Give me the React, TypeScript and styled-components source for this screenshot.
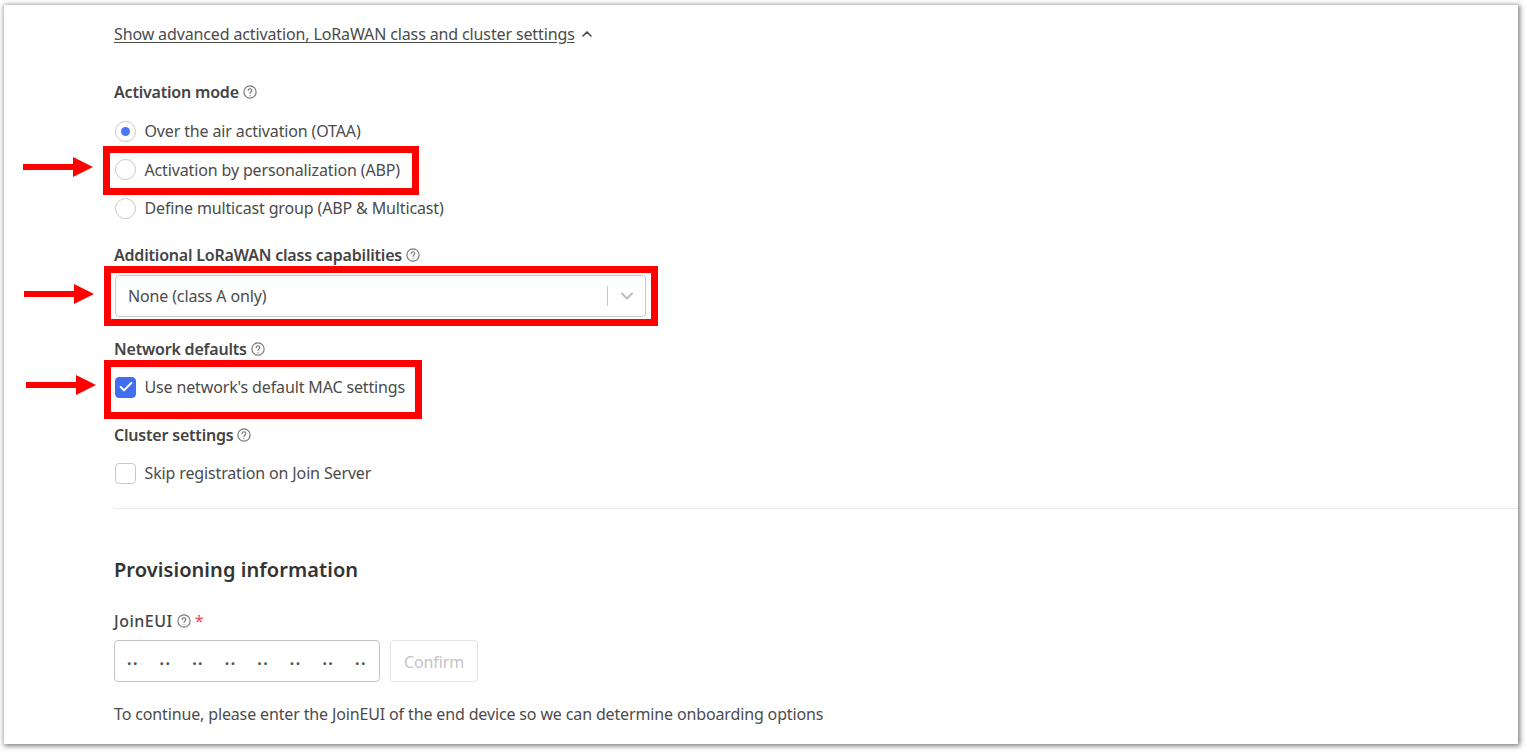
import React from 'react';
import styled, { createGlobalStyle } from 'styled-components';
import { Check, ChevronDown, ChevronUp } from 'lucide-react';

const Global = createGlobalStyle`
  html, body { margin: 0; padding: 0; background: #fff; }
  body { font-family: "Noto Sans", "Open Sans", sans-serif; color: #3a3a3a; }
`

const Page = styled.div`
  position: relative;
  width: 1527px;
  height: 753px;
  overflow: hidden;
`

const Card = styled.div`
  box-sizing: border-box;
  width: 1514px;
  height: 739px;
  margin: 5px 0 0 4px;
  padding: 18px 0 0 110px;
  background: #fff;
  box-shadow: 1px 1px 5px 1px rgba(0, 0, 0, 0.5);
`

const Toggle = styled.div`
  display: flex;
  align-items: center;
  gap: 4px;
  height: 22px;
  margin-bottom: 37px;
  font-size: 16px;
  letter-spacing: -0.13px;
  color: #4b4b4b;
  span { text-decoration: underline; text-underline-offset: 2px; }
`

const Label = styled.div<{ $after?: number }>`
  display: flex;
  align-items: center;
  gap: 4px;
  height: 20px;
  margin-bottom: ${p => p.$after ?? 0}px;
  font-size: 16px;
  font-weight: 600;
  letter-spacing: -0.2px;
  color: #444;
`

const FieldName = styled.span`
  font-weight: 500;
  letter-spacing: 0.5px;
`

const Hint = styled.svg`
  width: 14px;
  height: 14px;
  flex: none;
`

const Required = styled.span`
  color: #e5484d;
  font-weight: 400;
`

const Options = styled.div<{ $after: number; $gap?: number }>`
  display: flex;
  flex-direction: column;
  gap: ${p => p.$gap ?? 0}px;
  margin-bottom: ${p => p.$after}px;
`

const Option = styled.div`
  display: flex;
  align-items: center;
  gap: 8.5px;
  height: 22px;
  padding-left: 1px;
  font-size: 16px;
  letter-spacing: -0.14px;
  color: #4b4b4b;
`

const Radio = styled.span<{ $on?: boolean }>`
  box-sizing: border-box;
  width: 21px;
  height: 21px;
  flex: none;
  border-radius: 50%;
  border: 1px solid #c9c9c9;
  display: flex;
  align-items: center;
  justify-content: center;
  &::after {
    content: "";
    display: ${p => (p.$on ? 'block' : 'none')};
    width: 9px;
    height: 9px;
    border-radius: 50%;
    background: #4a76f5;
  }
`

const Box = styled.span<{ $on?: boolean }>`
  box-sizing: border-box;
  width: 21px;
  height: 21px;
  flex: none;
  border-radius: 4px;
  border: 1px solid ${p => (p.$on ? '#3f6ff0' : '#c9c9c9')};
  background: ${p => (p.$on ? '#3f6ff0' : '#fff')};
  color: #fff;
  display: flex;
  align-items: center;
  justify-content: center;
`

const Select = styled.div`
  box-sizing: border-box;
  width: 531px;
  height: 42px;
  margin: 10px 0 22px 1px;
  padding-left: 12px;
  display: flex;
  align-items: center;
  border: 1px solid #c9c9c9;
  border-radius: 4px;
  font-size: 16px;
  letter-spacing: -0.14px;
  color: #4b4b4b;
`

const SelectValue = styled.span`
  flex: 1;
`

const SelectArrow = styled.span`
  width: 37px;
  height: 20px;
  border-left: 1px solid #c9c9c9;
  color: #bdbdbd;
  display: flex;
  align-items: center;
  justify-content: center;
`

const Divider = styled.div`
  height: 1px;
  background: #ececec;
  margin-bottom: 47px;
`

const Heading = styled.h2`
  margin: 0 0 27px;
  height: 28px;
  line-height: 28px;
  font-size: 20px;
  font-weight: 600;
  letter-spacing: 0.07px;
  color: #333;
`

const InputRow = styled.div`
  display: flex;
  gap: 10px;
  margin: 9px 0 21px;
`

const Input = styled.div`
  box-sizing: border-box;
  width: 266px;
  height: 42px;
  padding: 3px 12px 0;
  display: flex;
  align-items: center;
  justify-content: space-between;
  border: 1px solid #c4c4c4;
  border-radius: 4px;
  font-size: 16px;
  font-weight: 700;
  letter-spacing: 1.5px;
  color: #555;
`

const Confirm = styled.div`
  box-sizing: border-box;
  width: 88px;
  height: 42px;
  padding-top: 1px;
  display: flex;
  align-items: center;
  justify-content: center;
  border: 1px solid #e4e4e4;
  border-radius: 4px;
  font-size: 16px;
  letter-spacing: -0.1px;
  color: #c4c4c4;
`

const Note = styled.div`
  font-size: 16px;
  line-height: 22px;
  letter-spacing: -0.14px;
  color: #4b4b4b;
`

const Highlight = styled.div<{ $x: number; $y: number; $w: number; $h: number }>`
  position: absolute;
  box-sizing: border-box;
  left: ${p => p.$x}px;
  top: ${p => p.$y}px;
  width: ${p => p.$w}px;
  height: ${p => p.$h}px;
  border: 7px solid #ff0000;
`

const Arrow = styled.svg<{ $x: number; $y: number }>`
  position: absolute;
  left: ${p => p.$x}px;
  top: ${p => p.$y}px;
  width: 70px;
  height: 22px;
`

const HintIcon = () => (
  <Hint viewBox="0 0 24 24" fill="none" stroke="#7a7a7a" strokeWidth="2" strokeLinecap="round">
    <circle cx="12" cy="12" r="10.5" />
    <path d="M9 9.5a3 3 0 1 1 4.6 2.5c-1 .7-1.6 1.3-1.6 2.5" />
    <path d="M12 18v.2" />
  </Hint>
)

const RedArrow = ({ x, y }: { x: number; y: number }) => (
  <Arrow $x={x} $y={y} viewBox="0 0 70 22">
    <path d="M0 8h50V1l20 10-20 10v-7H0z" fill="#ff0000" />
  </Arrow>
)

const App: React.FC = () => {
  return (
    <Page>
      <Global />
      <Card>
        <Toggle>
          <span>Show advanced activation, LoRaWAN class and cluster settings</span>
          <ChevronUp size={16} strokeWidth={2.5} />
        </Toggle>

        <Label $after={18}>Activation mode <HintIcon /></Label>
        <Options $after={26} $gap={16.5}>
          <Option><Radio $on />Over the air activation (OTAA)</Option>
          <Option><Radio />Activation by personalization (ABP)</Option>
          <Option><Radio />Define multicast group (ABP &amp; Multicast)</Option>
        </Options>

        <Label>Additional LoRaWAN class capabilities <HintIcon /></Label>
        <Select>
          <SelectValue>None (class A only)</SelectValue>
          <SelectArrow><ChevronDown size={20} strokeWidth={2.5} /></SelectArrow>
        </Select>

        <Label $after={17}>Network defaults <HintIcon /></Label>
        <Options $after={27}>
          <Option><Box $on><Check size={16} strokeWidth={3} /></Box>Use network's default MAC settings</Option>
        </Options>

        <Label $after={17}>Cluster settings <HintIcon /></Label>
        <Options $after={24}>
          <Option><Box />Skip registration on Join Server</Option>
        </Options>

        <Divider />

        <Heading>Provisioning information</Heading>

        <Label>
          <FieldName>JoinEUI</FieldName> <HintIcon /> <Required>*</Required>
        </Label>
        <InputRow>
          <Input>
            {Array.from({ length: 8 }).map((_, i) => <span key={i}>··</span>)}
          </Input>
          <Confirm>Confirm</Confirm>
        </InputRow>
        <Note>To continue, please enter the JoinEUI of the end device so we can determine onboarding options</Note>
      </Card>

      <Highlight $x={103} $y={146} $w={316} $h={49} />
      <Highlight $x={104} $y={266} $w={554} $h={60} />
      <Highlight $x={104} $y={360} $w={318} $h={59} />
      <RedArrow x={23} y={156} />
      <RedArrow x={24} y={283} />
      <RedArrow x={26} y={374} />
    </Page>
  );
}

export default App;
